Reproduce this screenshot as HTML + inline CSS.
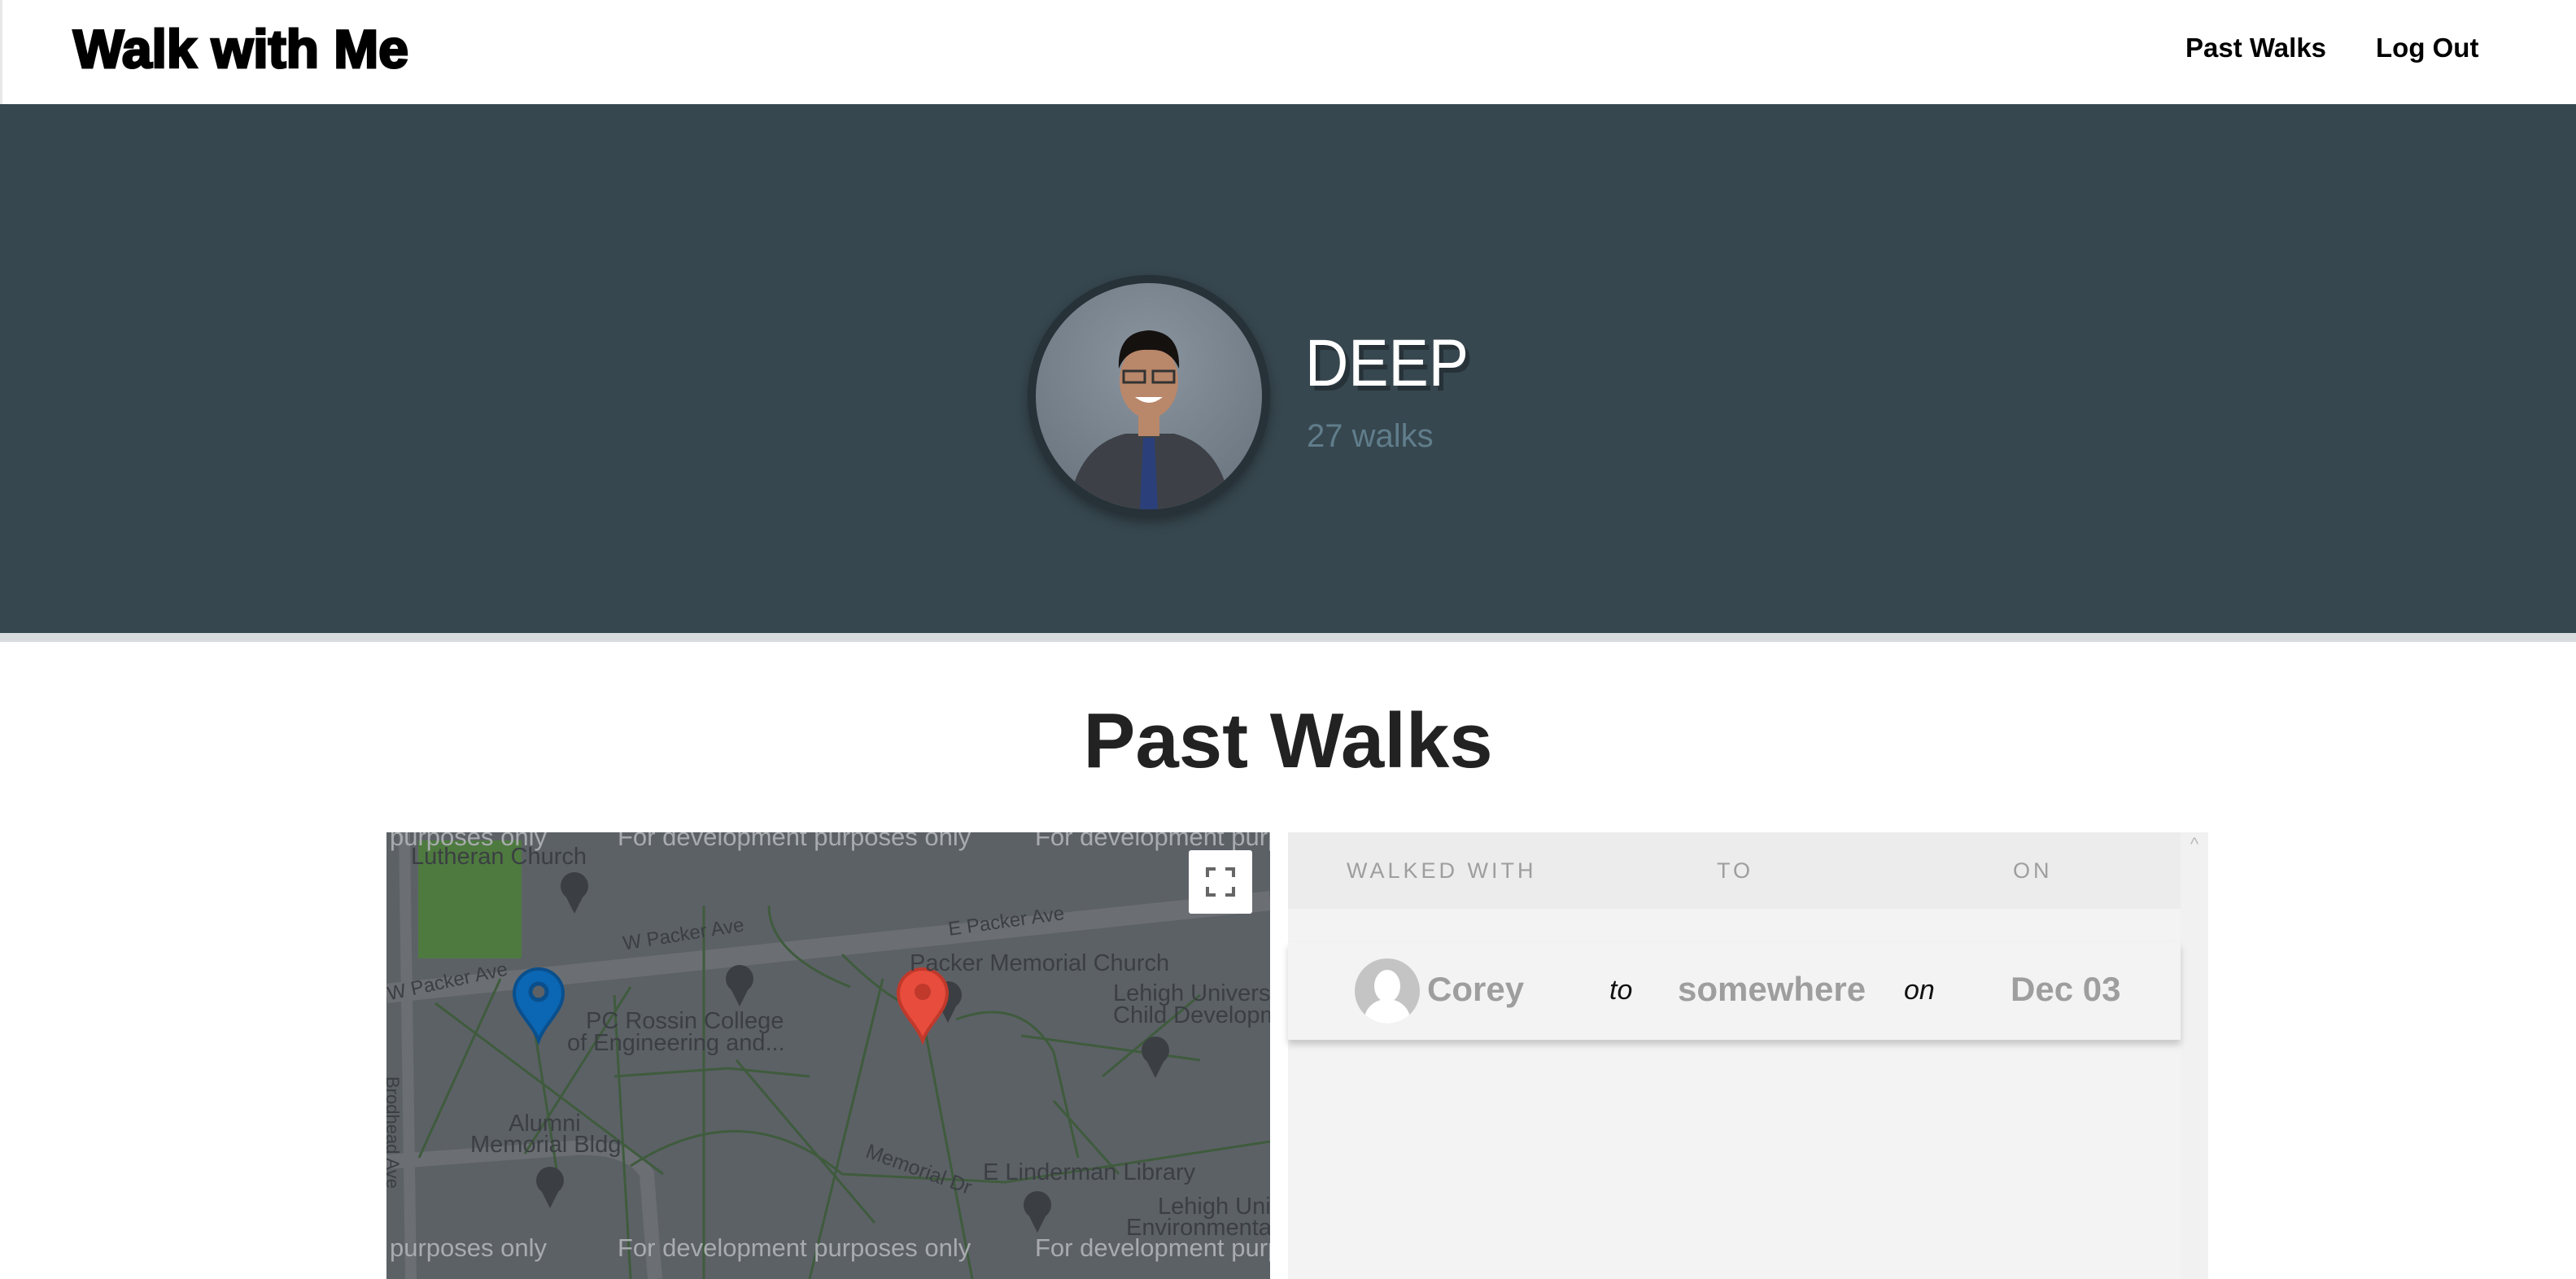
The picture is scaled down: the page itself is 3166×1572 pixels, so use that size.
<!DOCTYPE html>
<html><head><meta charset="utf-8"><style>
*{margin:0;padding:0;box-sizing:border-box}
body{width:3166px;height:1572px;overflow:hidden;background:#fff;font-family:"Liberation Sans",sans-serif;position:relative}
.abs{position:absolute}
.nav{left:0;top:0;width:3166px;height:128px;background:#fff;border-left:3px solid #e8e8e8}
.logo{left:90px;top:22px;font-size:66px;font-weight:bold;letter-spacing:0;color:#000;-webkit-text-stroke:3px #000}
.nl{top:40px;font-size:33px;font-weight:bold;color:#000}
.banner{left:0;top:128px;width:3166px;height:650px;background:#37474f}
.strip{left:0;top:778px;width:3166px;height:11px;background:#d8dcde}
.av{left:1263px;top:338px;width:298px;height:298px;border-radius:50%;background:#263238;box-shadow:0 6px 14px rgba(0,0,0,.35)}
.avi{left:1273px;top:348px;width:278px;height:278px;border-radius:50%;overflow:hidden;background:radial-gradient(circle at 50% 35%,#8a949e,#66707a)}
.deep{left:1604px;top:400px;font-size:82px;color:#fff;text-shadow:6px 6px 0 #263238;transform:scaleX(.9);transform-origin:left}
.walks{left:1606px;top:514px;font-size:40px;color:#607d8b}
h1{position:absolute;left:0;width:3166px;text-align:center;top:856px;font-size:96px;color:#222;font-weight:bold}
.map{left:475px;top:1023px;width:1086px;height:549px;background:#5c6166;overflow:hidden}
.panel{left:1583px;top:1023px;width:1097px;height:549px;background:#f3f3f3}
.sb{left:2680px;top:1023px;width:34px;height:549px;background:#f1f1f1}
.th{top:1023px;left:1583px;width:1097px;height:94px;background:#ececec}
.thx{top:1055px;font-size:27px;color:#9e9e9e;letter-spacing:4px}
.row{left:1583px;top:1158px;width:1097px;height:120px;background:#f3f3f3;box-shadow:0 6px 8px rgba(0,0,0,.18)}
.rt{top:1192px;font-size:42px;font-weight:bold;color:#9e9e9e}
.it{top:1198px;font-size:34px;font-style:italic;color:#111}
.ml{color:#3b3f43;font-size:29px;white-space:nowrap;position:absolute}
.dev{color:#a9acaf;font-size:31px;white-space:nowrap;position:absolute}
</style></head><body>
<div class="abs nav"></div>
<div class="abs logo">Walk with Me</div>
<div class="abs nl" style="left:2686px">Past Walks</div>
<div class="abs nl" style="left:2920px">Log Out</div>
<div class="abs banner"></div>
<div class="abs strip"></div>
<div class="abs av"></div>
<div class="abs avi">
<svg width="278" height="278" viewBox="0 0 278 278">
<path d="M40 278 Q50 200 110 185 L170 185 Q230 200 240 278Z" fill="#3d4147"/>
<path d="M132 190 L146 190 L150 278 L128 278Z" fill="#2b3f7a"/>
<ellipse cx="139" cy="120" rx="36" ry="46" fill="#b9876a"/>
<path d="M102 105 Q100 60 139 58 Q178 60 176 105 Q165 80 139 82 Q112 80 102 105Z" fill="#15110f"/>
<rect x="108" y="108" width="26" height="14" fill="none" stroke="#333" stroke-width="3"/>
<rect x="144" y="108" width="26" height="14" fill="none" stroke="#333" stroke-width="3"/>
<path d="M122 140 Q139 154 156 140Z" fill="#fff"/>
<rect x="126" y="160" width="26" height="28" fill="#b9876a"/>
</svg></div>
<div class="abs deep">DEEP</div>
<div class="abs walks">27 walks</div>
<h1>Past Walks</h1>
<div class="abs map">
<svg width="1086" height="549" viewBox="0 0 1086 549" style="position:absolute;left:0;top:0">
<rect x="39" y="10" width="127" height="145" fill="#4e7a3f"/>
<path d="M0 198 L1086 84" stroke="#6b6f73" stroke-width="24"/>
<path d="M22 0 L30 549" stroke="#6b6f73" stroke-width="14"/>
<path d="M0 405 L230 388 Q300 385 320 420 L330 549" stroke="#6b6f73" stroke-width="18" fill="none"/>
<g stroke="#3f5b3d" stroke-width="3" fill="none">
<path d="M60 210 L340 420"/><path d="M40 400 L140 180"/><path d="M170 395 L300 190"/><path d="M180 230 L210 420"/>
<path d="M280 200 L300 549"/><path d="M390 90 L390 549"/><path d="M280 300 L420 290 L520 300"/><path d="M430 280 L600 480"/>
<path d="M610 180 L520 549"/><path d="M650 180 L720 549"/><path d="M300 410 Q440 320 560 420 L760 430 L1086 380"/>
<path d="M560 150 Q620 210 660 220"/><path d="M470 90 Q470 150 570 190"/><path d="M820 330 L900 420"/><path d="M780 250 L1000 280"/>
<path d="M700 230 Q780 200 820 270 L850 400"/><path d="M880 300 L1000 200"/>
</g>
<g fill="#3b3f43">
<circle cx="231" cy="66" r="17"/><path d="M218 74 L231 100 L244 74Z"/>
<circle cx="434" cy="180" r="17"/><path d="M421 188 L434 214 L447 188Z"/>
<circle cx="690" cy="200" r="17"/><path d="M677 208 L690 234 L703 208Z"/>
<circle cx="945" cy="268" r="17"/><path d="M932 276 L945 302 L958 276Z"/>
<circle cx="201" cy="428" r="17"/><path d="M188 436 L201 462 L214 436Z"/>
<circle cx="800" cy="458" r="17"/><path d="M787 466 L800 492 L813 466Z"/>
</g>
<path transform="translate(157 168)" d="M30 88 C22 66 0 52 0 30 A30 30 0 0 1 60 30 C60 52 38 66 30 88Z" fill="#0b66b3" stroke="#0a4f8c" stroke-width="4"/>
<circle cx="187" cy="196" r="10" fill="#5c6166" stroke="#0a4f8c" stroke-width="5"/>
<path transform="translate(629 168)" d="M30 88 C22 66 0 52 0 30 A30 30 0 0 1 60 30 C60 52 38 66 30 88Z" fill="#e74c3c" stroke="#c0392b" stroke-width="4"/>
<circle cx="659" cy="196" r="10" fill="#c0392b"/>
</svg>
<div class="ml" style="left:30px;top:14px">Lutheran Church</div>
<div class="ml" style="left:290px;top:112px;font-size:24px;transform:rotate(-9deg)">W Packer Ave</div>
<div class="ml" style="left:0;top:170px;font-size:24px;transform:rotate(-12deg)">W Packer Ave</div>
<div class="ml" style="left:690px;top:96px;font-size:24px;transform:rotate(-8deg)">E Packer Ave</div>
<div class="ml" style="left:643px;top:145px">Packer Memorial Church</div>
<div class="ml" style="left:245px;top:216px">PC Rossin College</div>
<div class="ml" style="left:222px;top:243px">of Engineering and...</div>
<div class="ml" style="left:893px;top:182px">Lehigh Universit</div>
<div class="ml" style="left:893px;top:209px">Child Developm</div>
<div class="ml" style="left:150px;top:342px">Alumni</div>
<div class="ml" style="left:103px;top:368px">Memorial Bldg</div>
<div class="ml" style="left:20px;top:300px;font-size:22px;transform:rotate(90deg);transform-origin:left top">Brodhead Ave</div>
<div class="ml" style="left:595px;top:378px;font-size:25px;transform:rotate(20deg);transform-origin:left top">Memorial Dr</div>
<div class="ml" style="left:733px;top:402px">E Linderman Library</div>
<div class="ml" style="left:948px;top:444px">Lehigh Univ</div>
<div class="ml" style="left:909px;top:470px">Environmental</div>
<div class="dev" style="left:4px;top:-12px">purposes only</div>
<div class="dev" style="left:284px;top:-12px">For development purposes only</div>
<div class="dev" style="left:797px;top:-12px">For development purposes only</div>
<div class="dev" style="left:4px;top:493px">purposes only</div>
<div class="dev" style="left:284px;top:493px">For development purposes only</div>
<div class="dev" style="left:797px;top:493px">For development purposes only</div>
<div class="abs" style="left:986px;top:22px;width:78px;height:78px;background:#fff;border-radius:3px">
<svg width="78" height="78" viewBox="0 0 78 78"><path d="M23 33 V23 H33 M45 23 H55 V33 M55 45 V55 H45 M33 55 H23 V45" stroke="#666" stroke-width="4" fill="none"/></svg></div>
</div>
<div class="abs panel"></div>
<div class="abs sb"><div style="color:#bbb;font-size:22px;text-align:center;margin-top:2px">^</div></div>
<div class="abs th"></div>
<div class="abs thx" style="left:1655px">WALKED WITH</div>
<div class="abs thx" style="left:2110px">TO</div>
<div class="abs thx" style="left:2474px">ON</div>
<div class="abs row"></div>
<div class="abs" style="left:1665px;top:1178px;width:80px;height:80px;border-radius:50%;background:#c4c4c4;overflow:hidden">
<div style="position:absolute;left:24px;top:14px;width:32px;height:40px;border-radius:50%;background:#fff"></div>
<div style="position:absolute;left:12px;top:50px;width:56px;height:50px;border-radius:50%;background:#fff"></div></div>
<div class="abs rt" style="left:1754px">Corey</div>
<div class="abs it" style="left:1978px">to</div>
<div class="abs rt" style="left:2062px">somewhere</div>
<div class="abs it" style="left:2340px">on</div>
<div class="abs rt" style="left:2471px">Dec 03</div>
</body></html>
